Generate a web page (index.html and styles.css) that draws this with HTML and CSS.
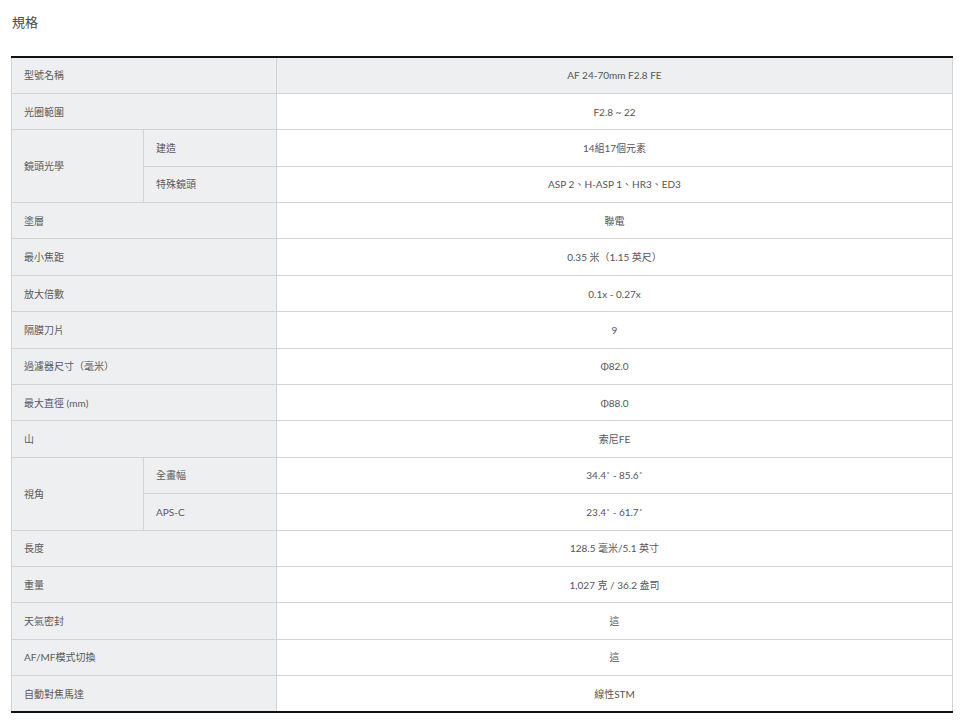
FILE: index.html
```html
<!DOCTYPE html>
<html lang="zh-Hant">
<head>
<meta charset="utf-8">
<title>規格</title>
<link rel="stylesheet" href="styles.css">
</head>
<body>
<div class="page">
  <h2 class="title">規格</h2>
  <table class="spec">
    <colgroup>
      <col class="c1">
      <col class="c2">
      <col class="c3">
    </colgroup>
    <tbody>
      <tr class="head"><th colspan="2">型號名稱</th><td>AF 24-70mm F2.8 FE</td></tr>
      <tr><th colspan="2">光圈範圍</th><td>F2.8 ~ 22</td></tr>
      <tr><th rowspan="2">鏡頭光學</th><th class="sub">建造</th><td>14組17個元素</td></tr>
      <tr><th class="sub">特殊鏡頭</th><td>ASP 2、H-ASP 1、HR3、ED3</td></tr>
      <tr><th colspan="2">塗層</th><td>聯電</td></tr>
      <tr><th colspan="2">最小焦距</th><td>0.35 米（1.15 英尺）</td></tr>
      <tr><th colspan="2">放大倍數</th><td>0.1x - 0.27x</td></tr>
      <tr><th colspan="2">隔膜刀片</th><td>9</td></tr>
      <tr><th colspan="2">過濾器尺寸（毫米）</th><td>Φ82.0</td></tr>
      <tr><th colspan="2">最大直徑 (mm)</th><td>Φ88.0</td></tr>
      <tr><th colspan="2">山</th><td>索尼FE</td></tr>
      <tr><th rowspan="2">視角</th><th class="sub">全畫幅</th><td>34.4˚ - 85.6˚</td></tr>
      <tr><th class="sub">APS-C</th><td>23.4˚ - 61.7˚</td></tr>
      <tr><th colspan="2">長度</th><td>128.5 毫米/5.1 英寸</td></tr>
      <tr><th colspan="2">重量</th><td>1,027 克 / 36.2 盎司</td></tr>
      <tr><th colspan="2">天氣密封</th><td>這</td></tr>
      <tr><th colspan="2">AF/MF模式切換</th><td>這</td></tr>
      <tr><th colspan="2">自動對焦馬達</th><td>線性STM</td></tr>
    </tbody>
  </table>
</div>
</body>
</html>
```
FILE: styles.css
```css
html, body {
  margin: 0;
  padding: 0;
  background: #ffffff;
}

body {
  font-family: Lato, "Noto Sans CJK TC", sans-serif;
  color: #555555;
}

.page {
  padding: 13px 7px 0 11px;
}

.title {
  margin: 0 0 0 1px;
  font-size: 13px;
  font-weight: 400;
  line-height: 18px;
  color: #4a4a4a;
  height: 43px;
}

.spec {
  width: 942px;
  border-collapse: collapse;
  table-layout: fixed;
  border-top: 2px solid #111111;
  border-bottom: 2px solid #111111;
  font-size: 10px;
}

.c1 { width: 132px; }
.c2 { width: 133px; }

.spec tr {
  height: 36.4px;
}

.spec th,
.spec td {
  border: 1px solid #d3d3d3;
  padding: 0 12px;
  font-weight: 400;
  line-height: 14px;
  vertical-align: middle;
}

.spec tr:first-child th,
.spec tr:first-child td {
  border-top: none;
}

.spec tr:last-child th,
.spec tr:last-child td {
  border-bottom: none;
}

.spec th {
  background: #eeeff0;
  text-align: left;
  color: #5a5a5a;
}

.spec td {
  background: #ffffff;
  text-align: center;
  color: #555555;
}

.spec tr.head td {
  background: #eeeff0;
}
```
